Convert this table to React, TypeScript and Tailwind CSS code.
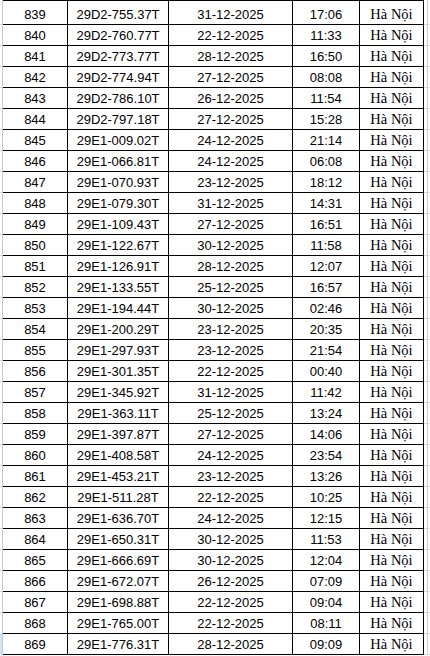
import React from "react";

const rows: [string, string, string, string][] = [
  ["839", "29D2-755.37T", "31-12-2025", "17:06"],
  ["840", "29D2-760.77T", "22-12-2025", "11:33"],
  ["841", "29D2-773.77T", "28-12-2025", "16:50"],
  ["842", "29D2-774.94T", "27-12-2025", "08:08"],
  ["843", "29D2-786.10T", "26-12-2025", "11:54"],
  ["844", "29D2-797.18T", "27-12-2025", "15:28"],
  ["845", "29E1-009.02T", "24-12-2025", "21:14"],
  ["846", "29E1-066.81T", "24-12-2025", "06:08"],
  ["847", "29E1-070.93T", "23-12-2025", "18:12"],
  ["848", "29E1-079.30T", "31-12-2025", "14:31"],
  ["849", "29E1-109.43T", "27-12-2025", "16:51"],
  ["850", "29E1-122.67T", "30-12-2025", "11:58"],
  ["851", "29E1-126.91T", "28-12-2025", "12:07"],
  ["852", "29E1-133.55T", "25-12-2025", "16:57"],
  ["853", "29E1-194.44T", "30-12-2025", "02:46"],
  ["854", "29E1-200.29T", "23-12-2025", "20:35"],
  ["855", "29E1-297.93T", "23-12-2025", "21:54"],
  ["856", "29E1-301.35T", "22-12-2025", "00:40"],
  ["857", "29E1-345.92T", "31-12-2025", "11:42"],
  ["858", "29E1-363.11T", "25-12-2025", "13:24"],
  ["859", "29E1-397.87T", "27-12-2025", "14:06"],
  ["860", "29E1-408.58T", "24-12-2025", "23:54"],
  ["861", "29E1-453.21T", "23-12-2025", "13:26"],
  ["862", "29E1-511.28T", "22-12-2025", "10:25"],
  ["863", "29E1-636.70T", "24-12-2025", "12:15"],
  ["864", "29E1-650.31T", "30-12-2025", "11:53"],
  ["865", "29E1-666.69T", "30-12-2025", "12:04"],
  ["866", "29E1-672.07T", "26-12-2025", "07:09"],
  ["867", "29E1-698.88T", "22-12-2025", "09:04"],
  ["868", "29E1-765.00T", "22-12-2025", "08:11"],
  ["869", "29E1-776.31T", "28-12-2025", "09:09"],
];

const cell =
  "flex items-end justify-center pb-[1px] border-b border-r border-black leading-[16px] text-[13px] text-black";
const sans = { fontFamily: '"Liberation Sans", Arial, sans-serif' };
const serif = { fontFamily: '"Liberation Serif", "Times New Roman", serif' };

export default function App() {
  return (
    <div className="w-[430px] h-[656px] bg-white overflow-hidden">
      {rows.map((r, i) => {
        const first = i === 0;
        const last = i === rows.length - 1;
        return (
          <div
            key={r[0]}
            className={
              "flex " + (first ? "h-[25px]" : "h-[21px]")
            }
          >
            <div
              className={
                "w-[3px] shrink-0 border-r border-b border-r-[#c8c8c8] border-b-[#d4d4d4] " +
                (last ? "bg-[#d3e3f5]" : "bg-white")
              }
            />
            <div
              className={cell + " w-[65px] shrink-0 " + (first ? "border-t" : "")}
              style={sans}
            >
              {r[0]}
            </div>
            <div
              className={cell + " w-[101px] shrink-0 " + (first ? "border-t" : "")}
              style={sans}
            >
              {r[1]}
            </div>
            <div
              className={cell + " w-[124px] shrink-0 " + (first ? "border-t" : "")}
              style={sans}
            >
              {r[2]}
            </div>
            <div
              className={cell + " w-[67px] shrink-0 " + (first ? "border-t" : "")}
              style={sans}
            >
              {r[3]}
            </div>
            <div
              className={
                "flex items-end justify-center pb-[1px] border-b border-r border-black leading-[17px] text-[14.5px] text-black w-[64px] shrink-0 " +
                (first ? "border-t" : "")
              }
              style={serif}
            >
              Hà Nội
            </div>
            <div className="w-[4px] shrink-0 border-r border-b border-r-[#d0d0d0] border-b-[#dadada]" />
            <div className="flex-1 border-b border-b-[#dadada]" />
          </div>
        );
      })}
    </div>
  );
}
